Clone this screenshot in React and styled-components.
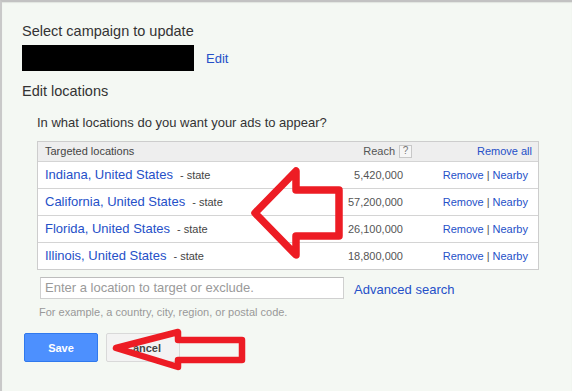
import React from "react";
import styled, { createGlobalStyle } from "styled-components";

const GlobalStyle = createGlobalStyle`
  html, body { margin: 0; padding: 0; background: #f4f8f3; }
  body { font-family: "Liberation Sans", Arial, sans-serif; }
  * { box-sizing: border-box; }
`;

const Frame = styled.div`
  position: relative;
  width: 572px;
  height: 391px;
  overflow: hidden;
`;

const Page = styled.div`
  width: 572px;
  height: 391px;
  background: #f4f8f3;
  border-left: 2px solid #c9c9c9;
  border-top: 2px solid #c2c2c2;
  box-shadow: inset 0 1px 1px rgba(0, 0, 0, 0.08);
  padding: 19.5px 0 0 20px;
  color: #333;
`;

const Title = styled.h2`
  margin: ${(p) => p.$mt || 0}px 0 0;
  font-size: 14.5px;
  line-height: 18px;
  font-weight: normal;
  color: #333;
`;

const CampaignRow = styled.div`
  display: flex;
  align-items: center;
  gap: 12px;
  margin-top: 5.5px;
`;

const Redacted = styled.div`
  width: 172px;
  height: 26px;
  background: #000;
`;

const Link = styled.a`
  color: ${(p) => p.$color || "#2550c8"};
  font-size: ${(p) => p.$size || 13}px;
  text-decoration: none;
  cursor: pointer;
`;

const Section = styled.div`
  padding-left: 15px;
`;

const Question = styled.p`
  margin: 15.3px 0 0;
  font-size: 13px;
  line-height: 16px;
  color: #333;
`;

const Table = styled.div`
  margin-top: 10.2px;
  width: 502px;
  border: 1px solid #cdcdcd;
  background: #fff;
`;

const GridRow = styled.div`
  display: grid;
  grid-template-columns: 1fr 100px 125px;
  align-items: center;
  height: ${(p) => (p.$header ? 20 : 27)}px;
  border-bottom: 1px solid #d4d4d4;
  background: ${(p) => (p.$header ? "#eeeeee" : "#ffffff")};
  font-size: 11px;
  color: #444;
  &:last-child { border-bottom: none; height: 26px; }
`;

const LocCell = styled.div`
  padding-left: 7px;
  white-space: nowrap;
`;

const ReachCell = styled.div`
  text-align: right;
  padding-right: ${(p) => (p.$header ? 1 : 10)}px;
  color: #555;
  display: flex;
  justify-content: flex-end;
  align-items: center;
`;

const ActionCell = styled.div`
  text-align: right;
  padding-right: ${(p) => (p.$header ? 6 : 10)}px;
  white-space: nowrap;
`;

const HelpBox = styled.span`
  display: inline-flex;
  align-items: center;
  justify-content: center;
  width: 13px;
  height: 13px;
  margin-left: 4px;
  border: 1px solid #c8c8c8;
  background: #f6f6f6;
  color: #777;
  font-size: 10px;
  line-height: 1;
`;

const Type = styled.span`
  margin-left: 7px;
  font-size: 11px;
  color: #444;
`;

const Sep = styled.span`
  color: #555;
  margin: 0 3px;
`;

const SearchRow = styled.div`
  display: flex;
  align-items: flex-start;
  gap: 10px;
  margin: 7px 0 0 3px;
`;

const Input = styled.input`
  width: 304px;
  height: 22px;
  border: 1px solid #d0d0d0;
  border-top-color: #bdbdbd;
  background: #fff;
  padding: 0 4px;
  font-family: "Liberation Sans", Arial, sans-serif;
  font-size: 13px;
  color: #333;
  outline: none;
  &::placeholder { color: #9a9a9a; }
`;

const AdvLink = styled(Link)`
  display: block;
  line-height: 16px;
  margin-top: 5px;
`;

const Hint = styled.div`
  margin: 6.5px 0 0 2px;
  font-size: 11px;
  line-height: 14px;
  color: #999;
`;

const ButtonRow = styled.div`
  display: flex;
  gap: 8px;
  margin: 14px 0 0 2px;
`;

const Button = styled.button`
  width: 74px;
  height: 29px;
  border-radius: 2px;
  font-family: "Liberation Sans", Arial, sans-serif;
  font-size: 11px;
  font-weight: bold;
  cursor: pointer;
  border: 1px solid ${(p) => (p.$primary ? "#3079ed" : "#d9d9d9")};
  background: ${(p) => (p.$primary ? "#4d90fe" : "#f3f3f3")};
  color: ${(p) => (p.$primary ? "#fff" : "#444")};
`;

const Overlay = styled.svg`
  position: absolute;
  top: 0;
  left: 0;
  pointer-events: none;
`;

const rows = [
  { name: "Indiana, United States", reach: "5,420,000" },
  { name: "California, United States", reach: "57,200,000" },
  { name: "Florida, United States", reach: "26,100,000" },
  { name: "Illinois, United States", reach: "18,800,000" },
];

export default function App() {
  return (
    <Frame>
      <GlobalStyle />
      <Page>
        <Title>Select campaign to update</Title>
        <CampaignRow>
          <Redacted />
          <Link>Edit</Link>
        </CampaignRow>
        <Title $mt={10.5}>Edit locations</Title>
        <Section>
          <Question>In what locations do you want your ads to appear?</Question>
          <Table>
            <GridRow $header>
              <LocCell>Targeted locations</LocCell>
              <ReachCell $header>
                Reach<HelpBox>?</HelpBox>
              </ReachCell>
              <ActionCell $header>
                <Link $size={11}>Remove all</Link>
              </ActionCell>
            </GridRow>
            {rows.map((r) => (
              <GridRow key={r.name}>
                <LocCell>
                  <Link>{r.name}</Link>
                  <Type>- state</Type>
                </LocCell>
                <ReachCell>{r.reach}</ReachCell>
                <ActionCell>
                  <Link $size={11}>Remove</Link>
                  <Sep>|</Sep>
                  <Link $size={11}>Nearby</Link>
                </ActionCell>
              </GridRow>
            ))}
          </Table>
          <SearchRow>
            <Input placeholder="Enter a location to target or exclude." />
            <AdvLink>Advanced search</AdvLink>
          </SearchRow>
          <Hint>For example, a country, city, region, or postal code.</Hint>
        </Section>
        <ButtonRow>
          <Button $primary>Save</Button>
          <Button>Cancel</Button>
        </ButtonRow>
      </Page>
      <Overlay width="572" height="391" viewBox="0 0 572 391">
        <path
          d="M255 213 L296 171 L296 190 L339 190 L339 236 L296 236 L296 255 Z"
          fill="none"
          stroke="#ed1c24"
          strokeWidth="7.5"
          strokeLinejoin="round"
        />
        <path
          d="M116 348 L178 332 L178 340 L242 340 L242 360 L178 360 L178 367 Z"
          fill="none"
          stroke="#ed1c24"
          strokeWidth="6.5"
          strokeLinejoin="round"
        />
      </Overlay>
    </Frame>
  );
}
